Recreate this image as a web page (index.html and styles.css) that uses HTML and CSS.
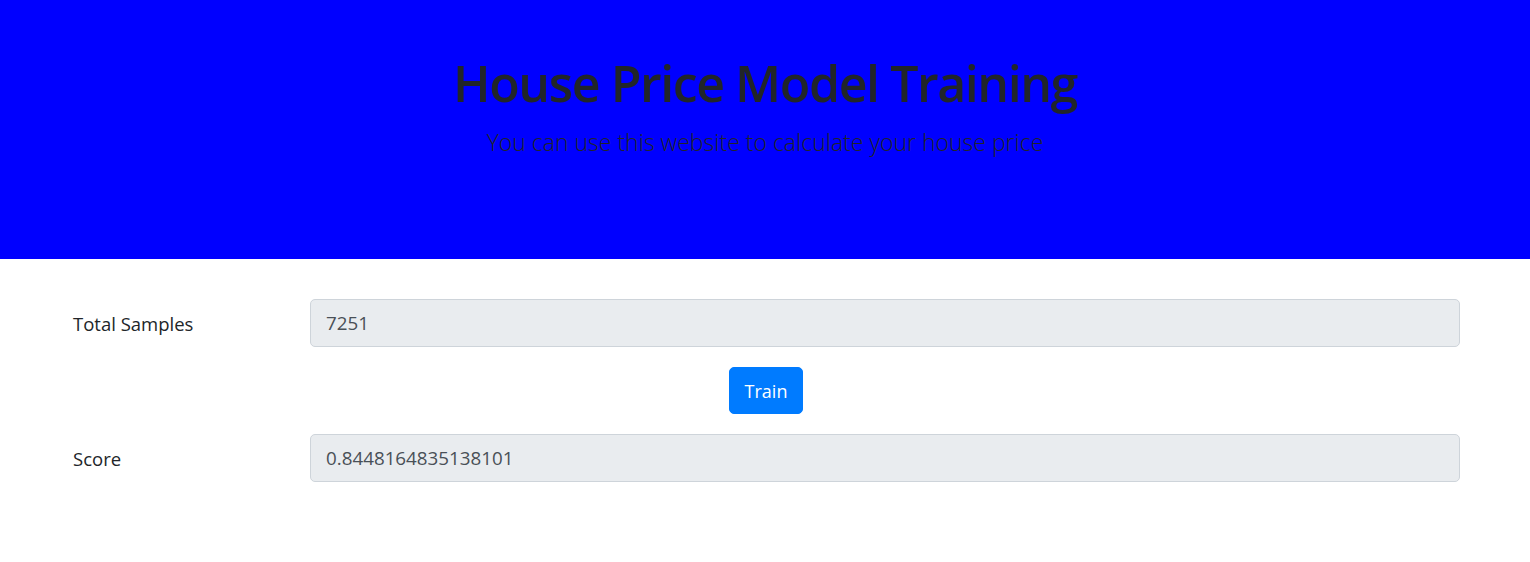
FILE: index.html
```html
<!DOCTYPE html>
<html lang="en">
<head>
<meta charset="utf-8">
<title>House Price Model Training</title>
<link rel="stylesheet" href="styles.css">
</head>
<body>
<header class="hero">
  <h1 class="hero-title">House Price Model Training</h1>
  <p class="hero-lead">You can use this website to calculate your house price</p>
</header>
<main class="form">
  <div class="form-row">
    <label class="form-label" for="samples">Total Samples</label>
    <input class="form-input" id="samples" type="text" value="7251" readonly>
  </div>
  <div class="btn-row">
    <button class="btn" type="button">Train</button>
  </div>
  <div class="form-row">
    <label class="form-label" for="score">Score</label>
    <input class="form-input" id="score" type="text" value="0.8448164835138101" readonly>
  </div>
</main>
</body>
</html>
```
FILE: styles.css
```css
* { box-sizing: border-box; }
body {
  margin: 0;
  font-family: "Open Sans", "Noto Sans", "Liberation Sans", sans-serif;
  color: #212529;
  background: #fff;
}
.hero {
  background: #0000ff;
  height: 259px;
  padding-top: 51px;
  text-align: center;
}
.hero-title {
  margin: 0;
  font-size: 50px;
  font-weight: 600;
  letter-spacing: -1.4px;
  line-height: 64px;
  color: #212529;
}
.hero-lead {
  margin: 11px 0 0;
  font-size: 23px;
  font-weight: 300;
  line-height: 32px;
  color: #212529;
}
.form {
  padding: 40px 70px 0 73px;
}
.form-row {
  display: flex;
  align-items: center;
}
.form-label {
  width: 237px;
  font-size: 18.5px;
  color: #212529;
}
.form-input {
  flex: 1;
  height: 48px;
  padding: 0 15px;
  font-family: inherit;
  font-size: 18.8px;
  color: #495057;
  background: #e9ecef;
  border: 1px solid #ced4da;
  border-radius: 5px;
  outline: none;
}
.btn-row {
  display: flex;
  justify-content: center;
  padding: 20px 0 20px 2px;
  margin-left: -73px;
  margin-right: -70px;
}
.btn {
  height: 47px;
  padding: 0 15px;
  font-family: inherit;
  font-size: 18px;
  color: #fff;
  background: #007bff;
  border: 1px solid #007bff;
  border-radius: 5px;
}
```
